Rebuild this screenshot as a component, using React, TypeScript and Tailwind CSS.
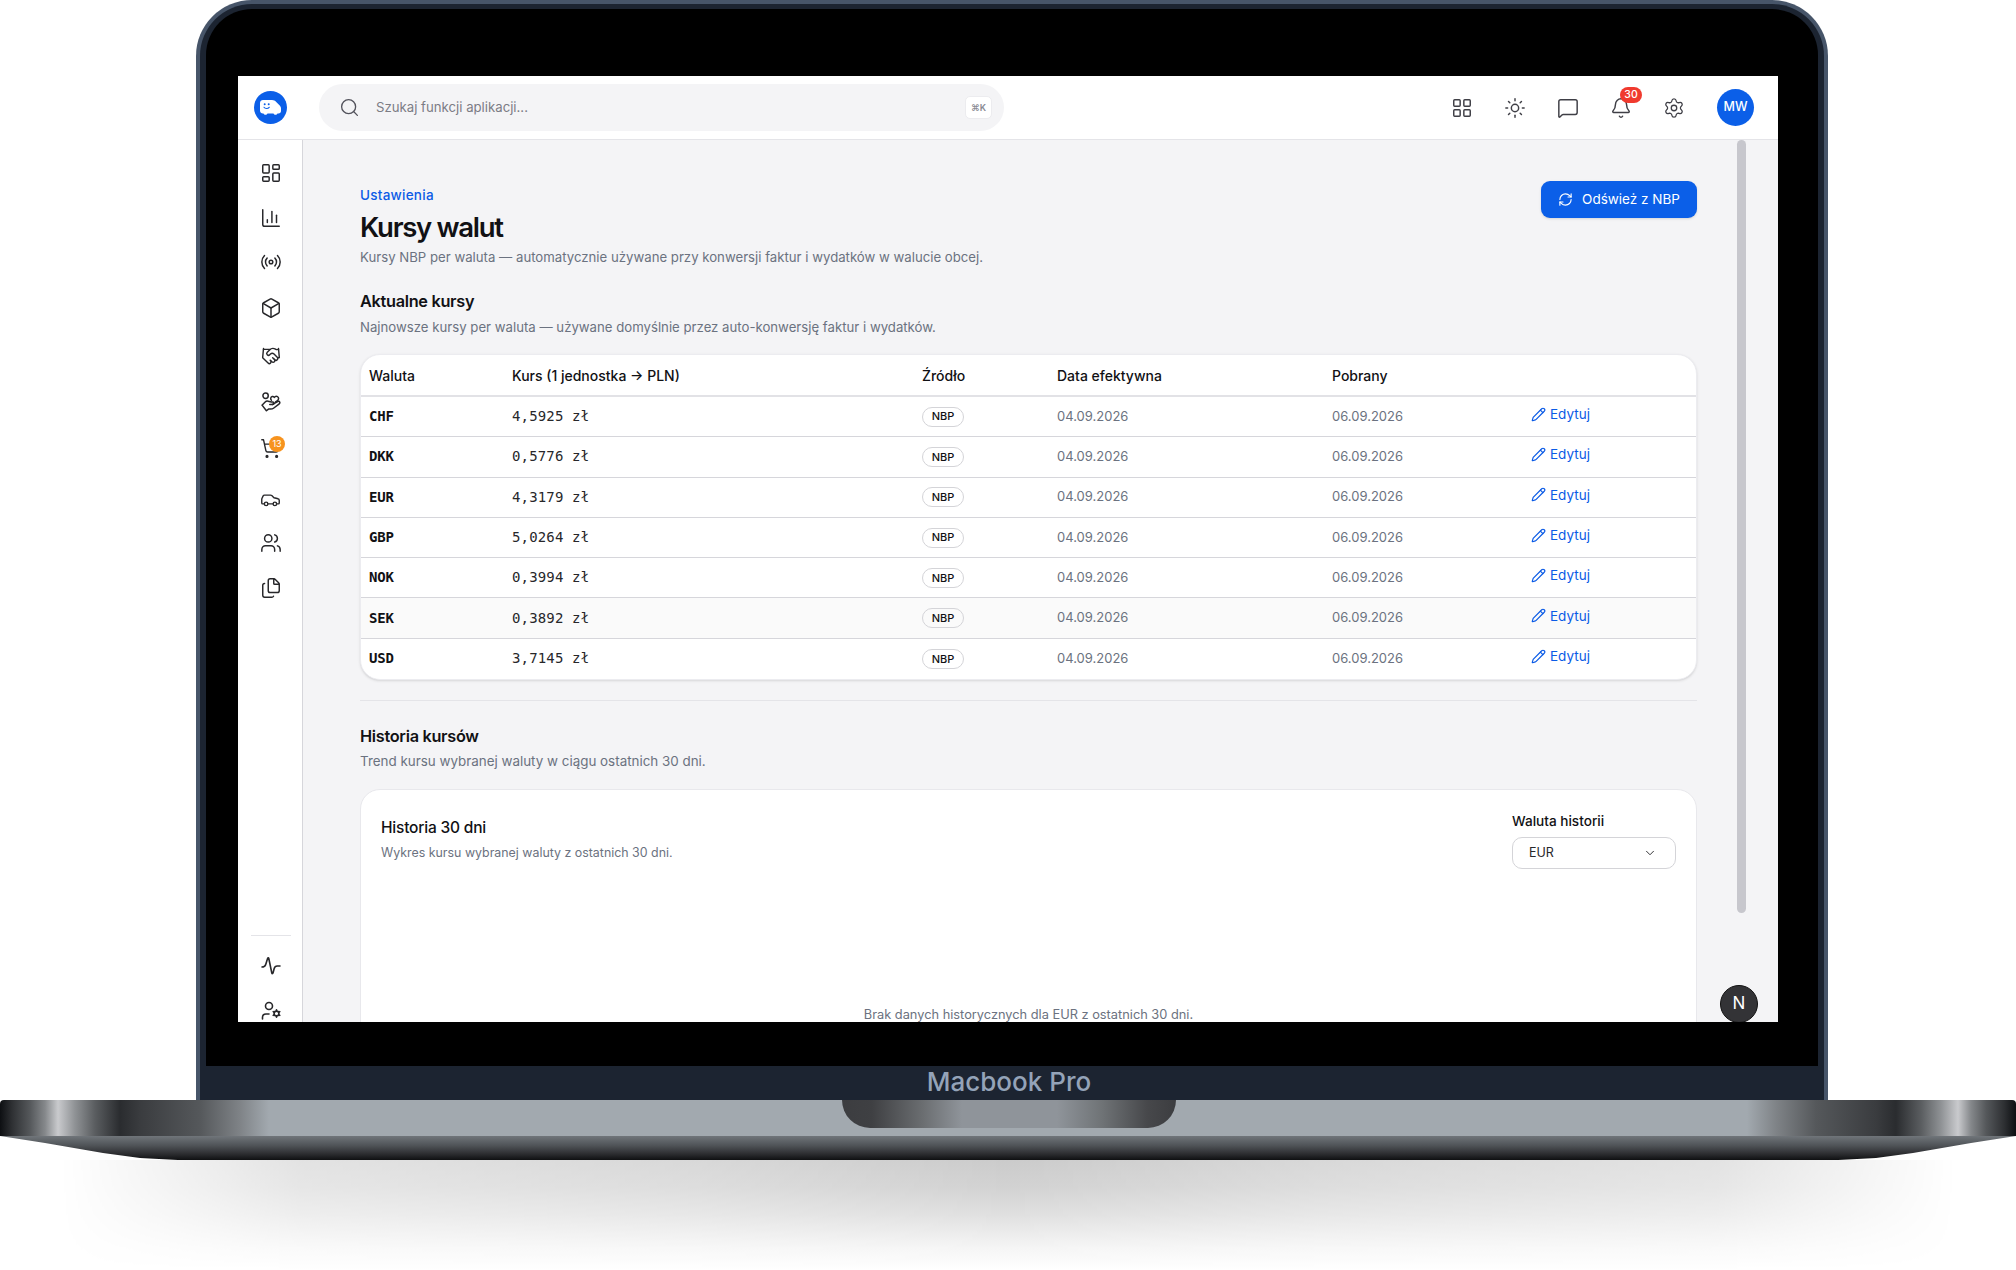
import React from "react";
import { LayoutDashboard, ChartColumn, Radio, Box, Handshake, ShoppingCart, Car, Users, Files, LayoutGrid, Sun, MessageSquare, Bell, Settings, RefreshCw, Pencil, ChevronDown, Search } from "lucide-react";

const rows = [
  ["CHF", "4,5925 zł"],
  ["DKK", "0,5776 zł"],
  ["EUR", "4,3179 zł"],
  ["GBP", "5,0264 zł"],
  ["NOK", "0,3994 zł"],
  ["SEK", "0,3892 zł"],
  ["USD", "3,7145 zł"],
];

const cols = "grid grid-cols-[151px_410px_135px_275px_199px_1fr] items-center";

function Logo() {
  return (
    <svg width="33" height="33" viewBox="0 0 33 33" className="shrink-0">
      <circle cx="16.5" cy="16.5" r="16.5" fill="#0b5fe8" />
      <path d="M6 12c0-1.700 1.300-3 3-3h9c1.800 0 3 .7 4.200 1.900l3 3c1.200 1.200 1.800 2 1.800 3.600v2.500c0 1.600-1 2.500-2.500 2.500h-1c-.7 1.800-3.300 1.800-4 0h-6c-.7 1.800-3.300 1.800-4 0H9c-1.700 0-3-1.300-3-3z" fill="#fff" />
      <circle cx="10.7" cy="13.300" r="1" fill="#0b5fe8" />
      <circle cx="14.700" cy="13.300" r="1" fill="#0b5fe8" />
      <path d="M10 16.300c1 1.600 4 1.600 5.200 0" stroke="#0b5fe8" strokeWidth="1.100" fill="none" strokeLinecap="round" />
    </svg>
  );
}

function SideIcon({ children, h }: { children: React.ReactNode; h: string }) {
  return <div className={`flex items-center justify-center w-full relative text-[#27272a] ${h}`}>{children}</div>;
}

export default function App() {
  return (
    <div className="w-[2016px] h-[1270px] bg-white overflow-hidden flex flex-col font-['Inter','Liberation_Sans',sans-serif]">
      {/* Lid */}
      <div className="ml-[196px] w-[1632px] h-[1100px] shrink-0 rounded-t-[56px] bg-[#475569] pt-[4px] px-[4px]">
        <div className="h-full rounded-t-[52px] bg-[#1c2431] pt-[5px] px-[6px] flex flex-col">
          <div className="h-[1057px] shrink-0 bg-black rounded-t-[46px] pt-[67px] pl-[32px] pr-[40px] pb-[44px]">
            {/* Screen */}
            <div className="h-[946px] w-[1540px] bg-[#f4f4f6] overflow-hidden flex flex-col">
              {/* Topbar */}
              <header className="h-[64px] shrink-0 bg-white border-b border-[#e4e4e8] flex items-center">
                <div className="w-[65px] flex justify-center shrink-0"><Logo /></div>
                <div className="ml-[16px] w-[685px] h-[47px] bg-[#f4f4f6] rounded-full flex items-center pl-[20px] pr-[12px]">
                  <Search size={21} strokeWidth={1.5} className="text-[#52525b]" />
                  <span className="ml-[16px] text-[13.2px] text-[#7c7c85]">Szukaj funkcji aplikacji...</span>
                  <span className="ml-auto w-[27px] h-[23px] bg-white rounded-[5px] border border-[#ececef] flex items-center justify-center text-[9px] font-semibold text-[#8a8a93]">⌘K</span>
                </div>
                <div className="ml-[431px] flex items-center text-[#3f3f46]">
                  <div className="w-[53px] flex justify-center"><LayoutGrid size={22} strokeWidth={1.6} /></div>
                  <div className="w-[53px] flex justify-center"><Sun size={22} strokeWidth={1.6} /></div>
                  <div className="w-[53px] flex justify-center"><MessageSquare size={22} strokeWidth={1.6} /></div>
                  <div className="w-[53px] flex justify-center relative">
                    <Bell size={22} strokeWidth={1.6} />
                    <span className="absolute left-[26px] top-[-10px] w-[22px] h-[16px] rounded-full bg-[#f03a2e] text-white text-[10.5px] font-medium flex items-center justify-center">30</span>
                  </div>
                  <div className="w-[53px] flex justify-center"><Settings size={22} strokeWidth={1.4} /></div>
                  <div className="ml-[17px] w-[37px] h-[37px] rounded-full bg-[#0b5fe8] text-white text-[12.5px] font-medium flex items-center justify-center">MW</div>
                </div>
              </header>

              <div className="flex-1 flex min-h-0">
                {/* Sidebar */}
                <aside className="w-[65px] shrink-0 bg-white border-r border-[#d6d6db] flex flex-col pt-[10px] pl-[1px]">
                  <SideIcon h="h-[45px]"><LayoutDashboard size={22} strokeWidth={1.6} /></SideIcon>
                  <SideIcon h="h-[45px]"><ChartColumn size={22} strokeWidth={1.6} /></SideIcon>
                  <SideIcon h="h-[44px]"><Radio size={22} strokeWidth={1.6} /></SideIcon>
                  <SideIcon h="h-[48px]"><Box size={22} strokeWidth={1.6} /></SideIcon>
                  <SideIcon h="h-[47px]"><Handshake size={20} strokeWidth={1.7} /></SideIcon>
                  <SideIcon h="h-[45px]">
                    <svg width="20" height="20" viewBox="0 0 24 24" fill="none" stroke="currentColor" strokeWidth="1.8" strokeLinecap="round" strokeLinejoin="round">
                      <circle cx="5.500" cy="4.500" r="3.200" />
                      <path d="M12.500 10c-1.500-1.500-1-4 1-4.500 1.200-.3 2 .3 2.500 1 .5-.7 2-2 3.800-1 2 1.200 1.500 3.500 0 5L17.500 12" />
                      <path d="M1.500 15.500 5 12c1-1 2-1.300 3.500-1l4 1h1.500c2 0 2 3 0 3h-3.500" />
                      <path d="M13.500 15l6.500-3.500c2.500-1 3.500 1.500 1.500 3l-6.500 5c-1 .8-2 1-3.500 1H9l-2.500 2-5-6.500" />
                    </svg>
                  </SideIcon>
                  <SideIcon h="h-[48px]">
                    <ShoppingCart size={21} strokeWidth={1.6} />
                    <span className="absolute left-[30px] top-[12px] w-[16px] h-[16px] rounded-full bg-[#f7931e] text-white text-[9px] flex items-center justify-center">13</span>
                  </SideIcon>
                  <SideIcon h="h-[55px]"><Car size={21} strokeWidth={1.6} /></SideIcon>
                  <SideIcon h="h-[32px]"><Users size={22} strokeWidth={1.6} /></SideIcon>
                  <SideIcon h="h-[58px]"><Files size={22} strokeWidth={1.6} /></SideIcon>
                  <div className="mt-auto mx-auto w-[40px] border-t border-[#e4e4e8]" />
                  <SideIcon h="h-[60px]">
                    <svg width="20" height="20" viewBox="0 0 20 20" fill="none" stroke="currentColor" strokeWidth="1.6" strokeLinecap="round" strokeLinejoin="round">
                      <path d="M1 11c2 0 3-.4 3.700-2.600L6.600 2.500c.3-.8 1-.8 1.200 0l3 14.500c.2.800.9.800 1.200 0l1.200-4.500c.4-1.500 1.400-2.500 3-2.500h2.800" />
                    </svg>
                  </SideIcon>
                  <SideIcon h="h-[30px] -mb-[4px]">
                    <svg width="20" height="20" viewBox="0 0 20 20" fill="none" stroke="currentColor" strokeWidth="1.6" strokeLinecap="round" strokeLinejoin="round">
                      <circle cx="8" cy="5" r="3.500" />
                      <path d="M1.500 18v-1.500c0-2 1.500-3.500 3.500-3.500h3" />
                      <circle cx="15.500" cy="12.500" r="2.400" />
                      <path d="M15.500 8.800v1.200M15.500 15v1.200M12.200 10.600l1 .6M17.800 13.800l1 .6M12.200 14.400l1-.6M17.800 11.200l1-.6" />
                    </svg>
                  </SideIcon>
                </aside>

                {/* Main */}
                <main className="flex-1 min-w-0 relative overflow-hidden bg-[#f4f4f6] pl-[57px] pr-[81px] pt-[41px] text-[#111114]">
                  <div className="absolute right-[32px] top-0 w-[9px] h-[773px] rounded-full bg-[#c7c7cd]" />
                  <div className="absolute right-[20px] top-[845px] w-[38px] h-[38px] rounded-full bg-[#333336] border border-[#111] text-white text-[17px] flex items-center justify-center">N</div>

                  <div className="flex justify-between items-start">
                    <div className="pt-[5px]">
                      <div className="text-[13.5px] leading-[18px] font-medium text-[#0b5be6] tracking-[0.25px]">Ustawienia</div>
                      <h1 className="mt-[5px] text-[27.5px] leading-[36px] font-semibold tracking-[-1.3px]">Kursy walut</h1>
                      <p className="mt-[2px] text-[13.2px] leading-[20px] text-[#6b7280]">Kursy NBP per waluta — automatycznie używane przy konwersji faktur i wydatków w walucie obcej.</p>
                    </div>
                    <button className="w-[156px] h-[37px] rounded-[9px] bg-[#0b5fe8] text-white text-[13.5px] flex items-center justify-center gap-[9px] shadow-sm">
                      <RefreshCw size={15} strokeWidth={1.8} />Odśwież z NBP
                    </button>
                  </div>

                  <h2 className="mt-[22px] text-[16.3px] leading-[24px] font-semibold tracking-[-0.3px]">Aktualne kursy</h2>
                  <p className="mt-[4px] text-[13.2px] leading-[20px] text-[#6b7280]">Najnowsze kursy per waluta — używane domyślnie przez auto-konwersję faktur i wydatków.</p>

                  {/* Table */}
                  <div className="mt-[17px] bg-white rounded-[20px] border border-[#ececf0] shadow-sm overflow-hidden">
                    <div className={`${cols} h-[42px] border-b-2 border-[#e2e2e6] text-[14px] font-medium`}>
                      <div className="pl-[8px]">Waluta</div>
                      <div>Kurs (1 jednostka → PLN)</div>
                      <div>Źródło</div>
                      <div>Data efektywna</div>
                      <div>Pobrany</div>
                      <div />
                    </div>
                    {rows.map(([c, v], i) => (
                      <div key={c} className={`${cols} h-[40.3px] ${i < rows.length - 1 ? "border-b border-[#d6d6db]" : ""} ${c === "SEK" ? "bg-[#fafafa]" : ""}`}>
                        <div className="pl-[8px] font-['DejaVu_Sans_Mono',monospace] font-bold text-[14px] tracking-[-0.2px]">{c}</div>
                        <div className="font-['DejaVu_Sans_Mono',monospace] text-[14px] text-[#27272a] tracking-[0.15px]">{v}</div>
                        <div className="flex">
                          <span className="flex items-center justify-center w-[42px] h-[20px] rounded-full border border-[#d4d4d8] text-[11px] font-medium">NBP</span>
                        </div>
                        <div className="text-[13px] text-[#6b7280]">04.09.2026</div>
                        <div className="text-[13px] text-[#6b7280]">06.09.2026</div>
                        <div className="-mt-[5px] flex items-center gap-[4px] text-[#0b5be6] text-[13.5px]">
                          <Pencil size={15} strokeWidth={1.9} />Edytuj
                        </div>
                      </div>
                    ))}
                  </div>

                  <div className="mt-[20px] border-t border-[#e4e4e8]" />

                  <h2 className="mt-[23px] text-[16.3px] leading-[24px] font-semibold tracking-[-0.3px]">Historia kursów</h2>
                  <p className="mt-[3px] text-[13.4px] leading-[20px] text-[#6b7280]">Trend kursu wybranej waluty w ciągu ostatnich 30 dni.</p>

                  {/* History card */}
                  <div className="mt-[18px] h-[400px] bg-white rounded-[20px] border border-[#e8e8ec] pt-[21px] px-[20px]">
                    <div className="flex justify-between items-start">
                      <div className="pt-[5px]">
                        <div className="text-[15.5px] leading-[24px] font-medium tracking-[-0.2px]">Historia 30 dni</div>
                        <div className="mt-[4px] text-[12.4px] leading-[18px] text-[#6b7280]">Wykres kursu wybranej waluty z ostatnich 30 dni.</div>
                      </div>
                      <div className="w-[164px] pt-[1px]">
                        <div className="text-[13.6px] leading-[18px] font-medium">Waluta historii</div>
                        <div className="mt-[7px] h-[32px] rounded-[10px] border border-[#d4d4d8] flex items-center justify-between pl-[16px] pr-[18px] text-[12.5px] text-[#27272a]">
                          <span className="pt-[1px]">EUR</span><ChevronDown size={14} strokeWidth={1.6} />
                        </div>
                      </div>
                    </div>
                    <div className="mt-[136px] text-center text-[12.8px] leading-[20px] text-[#6b7280]">Brak danych historycznych dla EUR z ostatnich 30 dni.</div>
                  </div>
                </main>
              </div>
            </div>
          </div>
          <div className="flex-1 flex items-center justify-center pr-[6px] text-[#94a3b8] text-[26px] font-medium leading-none -mt-[2px]">Macbook Pro</div>
        </div>
      </div>

      {/* Base */}
      <div className="h-[36px] shrink-0 relative rounded-t-[4px] bg-[linear-gradient(to_right,#0d0f12_0px,#2e3033_12px,#55585b_30px,#85888b_45px,#c9cacd_58px,#8f9295_75px,#5a5d60_95px,#2a2c2f_120px,#3a3c3f_140px,#55585b_200px,#7f8387_240px,#a2a9af_269px,#a2a9af_1747px,#7f8387_1776px,#55585b_1816px,#3a3c3f_1876px,#2a2c2f_1896px,#5a5d60_1921px,#8f9295_1941px,#c9cacd_1958px,#85888b_1971px,#55585b_1986px,#2e3033_2004px,#0d0f12_2016px)]">
        <div className="absolute left-[842px] top-0 w-[334px] h-[28px] rounded-b-[28px] bg-[linear-gradient(to_right,#3c3d40_0px,#3f4043_30px,#6a6d70_80px,#8f949a_120px,#8f949a_215px,#6f7376_260px,#47484b_305px,#3c3d40_334px)]" />
      </div>
      <div className="h-[24px] shrink-0 bg-[linear-gradient(to_bottom,#70757a_0%,#4f5357_40%,#2c2d30_75%,#0f1012_100%)] [clip-path:polygon(0_0,100%_0,1971px_7px,1913px_17px,1876px_22px,1838px_24px,178px_24px,140px_22px,103px_17px,45px_7px)]" />
      {/* Shadow */}
      <div className="flex-1 bg-[linear-gradient(to_bottom,#cbcbcb_0%,#d2d2d2_25%,#e0e0e0_50%,#f5f5f5_80%,#ffffff_100%)] [mask-image:linear-gradient(to_right,transparent_60px,rgba(0,0,0,0.55)_300px,rgba(0,0,0,0.75)_700px,black_1008px,rgba(0,0,0,0.75)_1316px,rgba(0,0,0,0.55)_1716px,transparent_1956px)]" />
    </div>
  );
}
